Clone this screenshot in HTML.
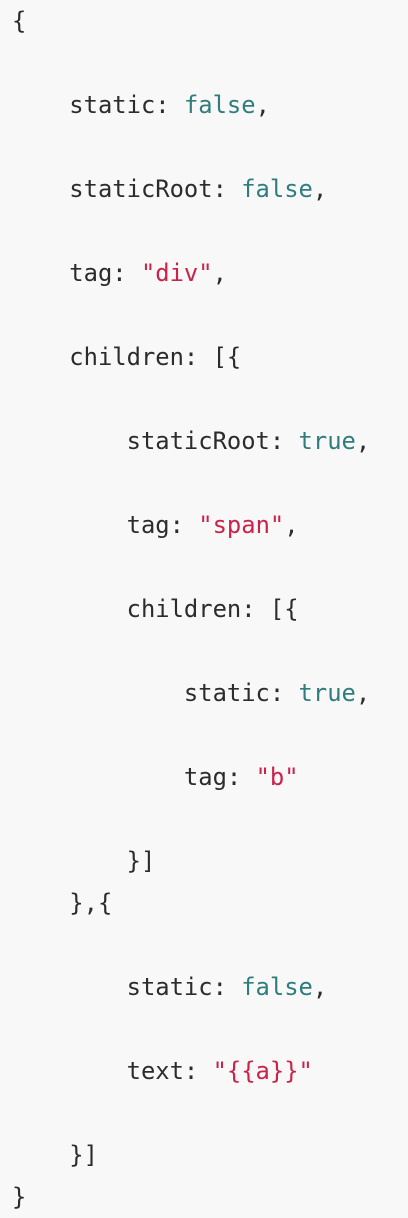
<!DOCTYPE html>
<html><head><meta charset="utf-8"><style>
html,body{margin:0;padding:0;background:#f8f8f8;width:408px;height:1218px;overflow:hidden}
pre{margin:0;padding:0 0 0 12px;font-family:"DejaVu Sans Mono","Liberation Mono",monospace;font-size:23.8px;line-height:42px;color:#2c2c2c}
.b{color:#2f7d7d}.s{color:#c9234a}
</style></head><body><pre>{

    static: <span class="b">false</span>,

    staticRoot: <span class="b">false</span>,

    tag: <span class="s">"div"</span>,

    children: [{

        staticRoot: <span class="b">true</span>,

        tag: <span class="s">"span"</span>,

        children: [{

            static: <span class="b">true</span>,

            tag: <span class="s">"b"</span>

        }]
    },{

        static: <span class="b">false</span>,

        text: <span class="s">"{{a}}"</span>

    }]
}</pre></body></html>
